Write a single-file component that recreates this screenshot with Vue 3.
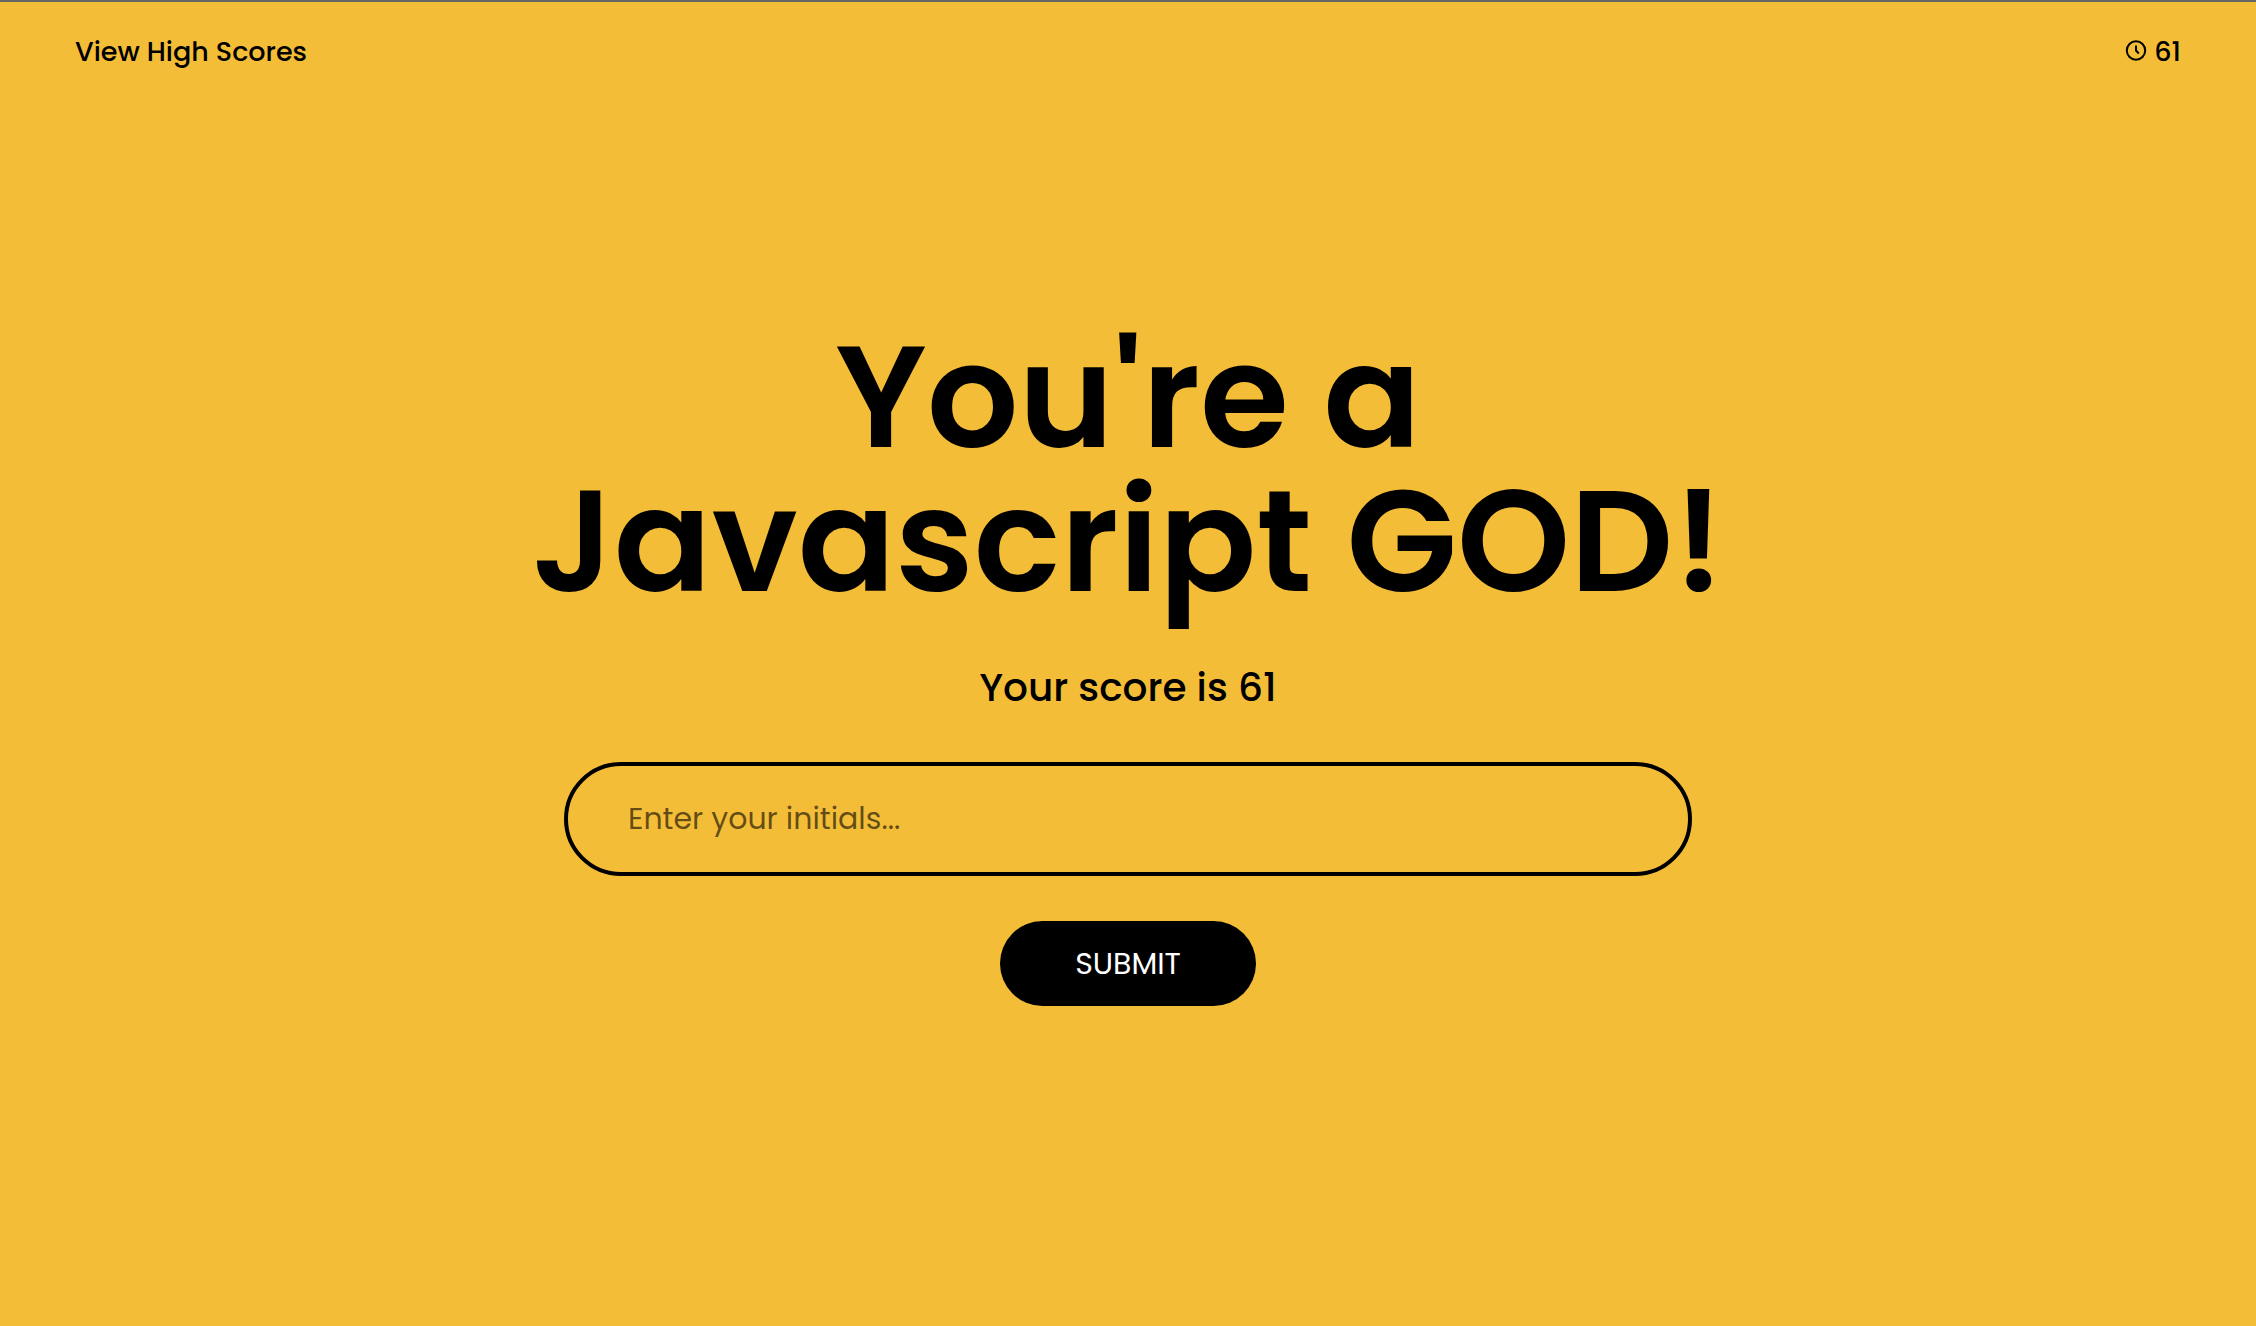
<script setup>
import { ref } from 'vue'

const score = ref(61)
const initials = ref('')
</script>

<template>
  <div class="page">
    <header class="bar">
      <a class="scores" href="#scores">View High Scores</a>
      <div class="timer">
        <svg class="clock" viewBox="0 0 22 24" aria-hidden="true">
          <circle cx="11" cy="10.500" r="9.200" />
          <path d="M11 5.500v5l2.800 3" />
        </svg>
        <span>{{ score }}</span>
      </div>
    </header>
    <main class="result">
      <h1>You're a<br />Javascript GOD!</h1>
      <p class="score">Your score is {{ score }}</p>
      <form class="entry" @submit.prevent>
        <input v-model="initials" type="text" placeholder="Enter your initials..." aria-label="Enter your initials" />
        <button type="submit">SUBMIT</button>
      </form>
    </main>
  </div>
</template>

<style>
body {
  margin: 0;
  background: #f4bd37;
}
</style>

<style scoped>
.page {
  box-sizing: border-box;
  min-height: 100vh;
  display: flex;
  flex-direction: column;
  border-top: 2px solid #666;
  background: #f4bd37;
  color: #000;
  font-family: Poppins, Inter, sans-serif;
}

.bar {
  display: flex;
  justify-content: space-between;
  align-items: center;
  padding: 29px 75px;
  font-size: 27px;
  line-height: 42px;
  font-weight: 500;
}

.scores {
  color: inherit;
  text-decoration: none;
}

.timer {
  display: flex;
  align-items: center;
  gap: 7px;
}

.clock {
  width: 22px;
  height: 24px;
  fill: none;
  stroke: #000;
  stroke-width: 2;
}

.result {
  display: flex;
  flex-direction: column;
  align-items: center;
  padding-top: 223px;
}

h1 {
  margin: 0;
  font-size: 144px;
  line-height: 144px;
  font-weight: 600;
  text-align: center;
}

.score {
  margin: 45px 0 44px;
  font-size: 39px;
  line-height: 60px;
  font-weight: 500;
}

.entry {
  width: 50%;
  display: flex;
  flex-direction: column;
  align-items: center;
  gap: 45px;
}

input {
  box-sizing: border-box;
  width: 100%;
  height: 114px;
  padding: 0 60px;
  border: 4px solid #000;
  border-radius: 57px;
  background: transparent;
  color: #000;
  font-family: inherit;
  font-size: 30px;
  outline: none;
}

input::placeholder {
  color: rgba(0, 0, 0, 0.6);
  opacity: 1;
}

button {
  padding: 20px 75px;
  border: 0;
  border-radius: 43px;
  background: #000;
  color: #fff;
  font-family: inherit;
  font-size: 30px;
  line-height: 45px;
}
</style>
